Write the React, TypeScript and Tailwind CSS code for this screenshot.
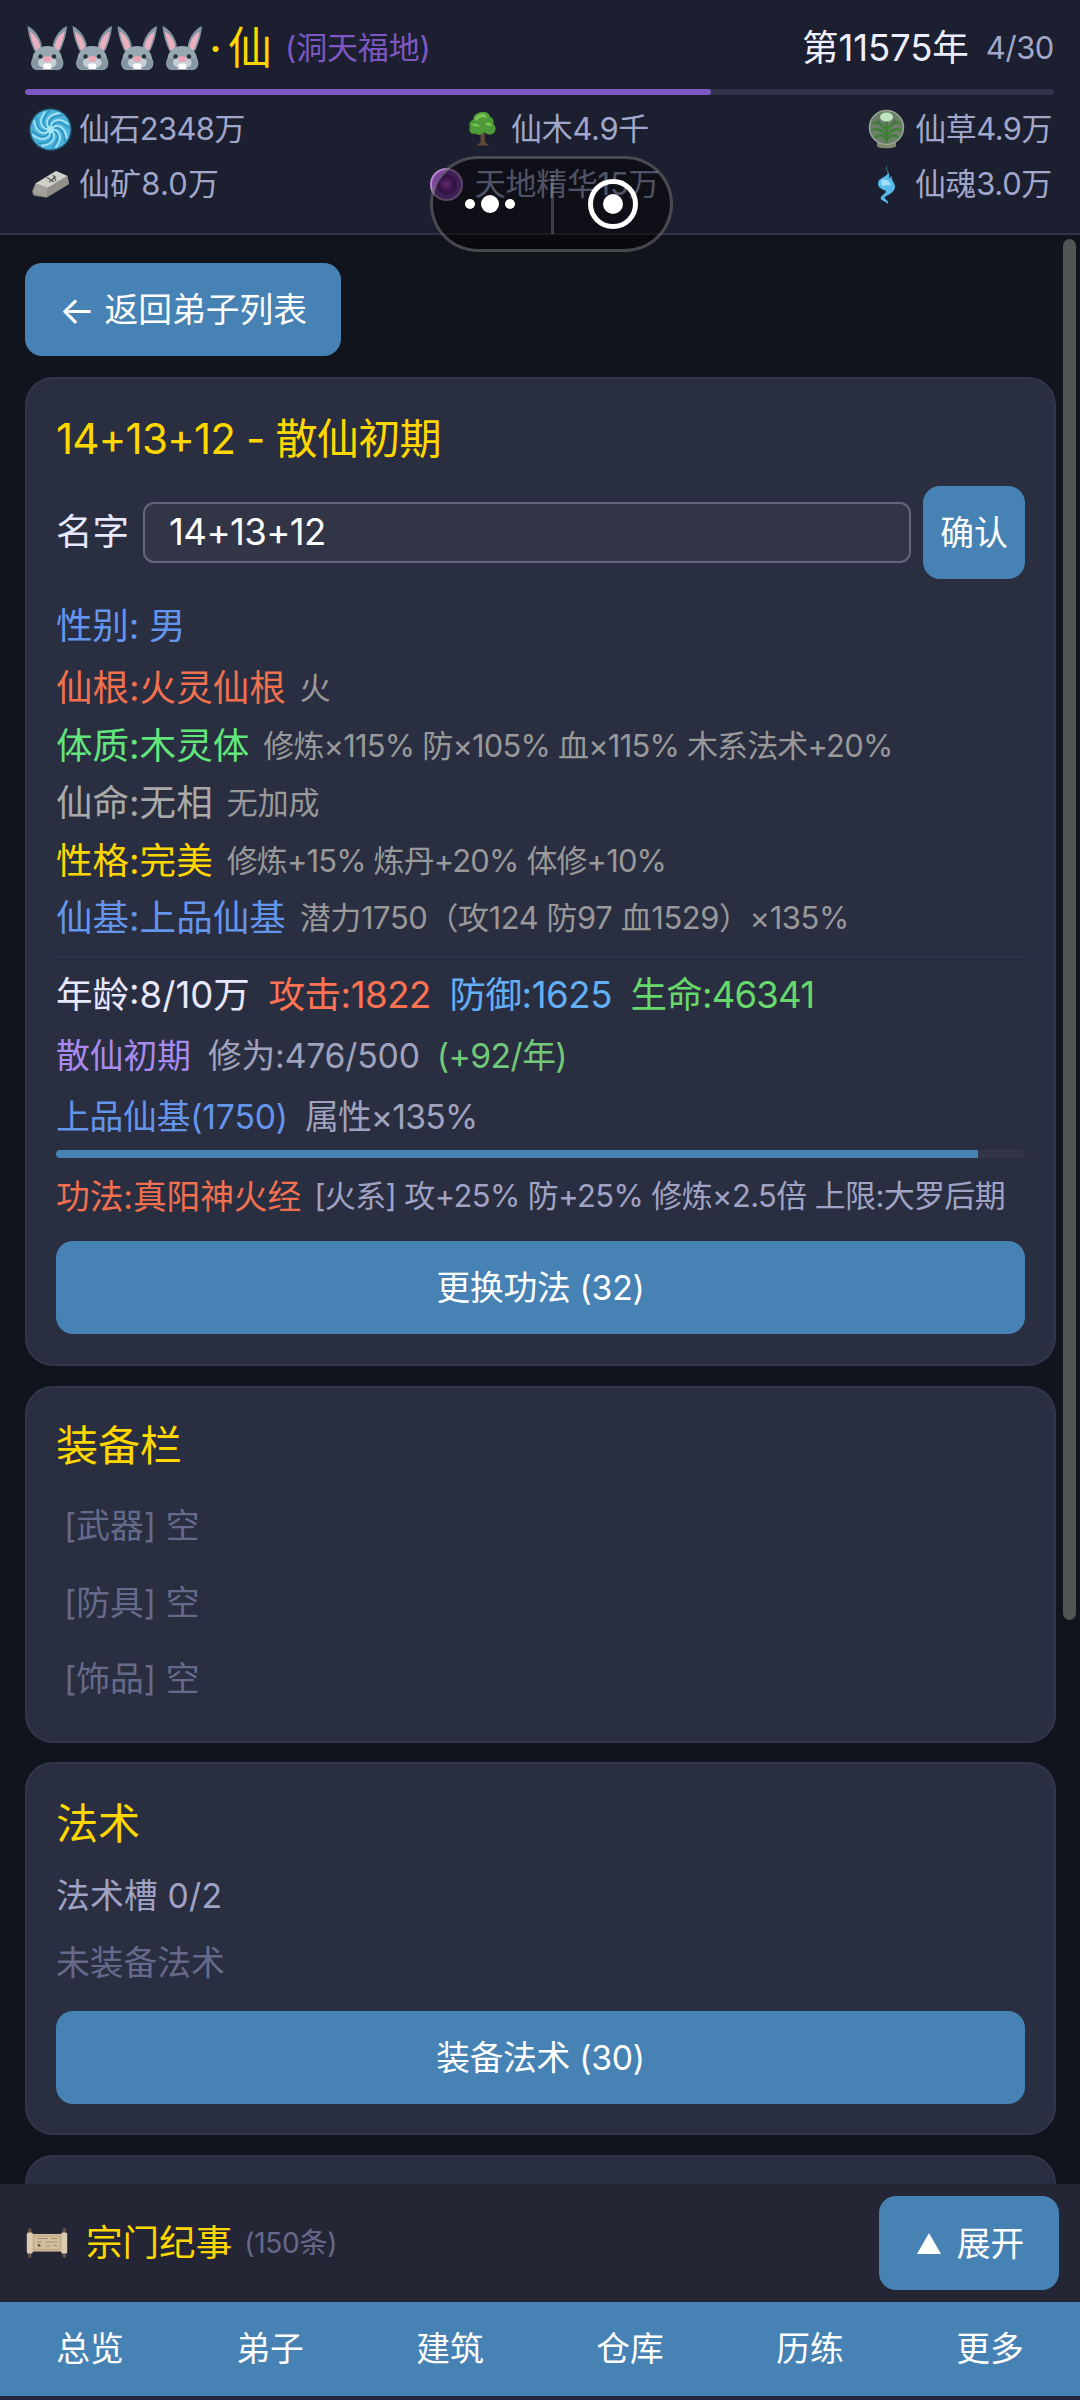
import React from "react";

function Rabbit() {
  return (
    <svg viewBox="0 0 45 48" className="h-[48px] w-[45px] shrink-0">
      <path d="M2.500 2C9 5 14 11 16.500 20L17 27H9.500C6 20 3 10 2.500 2Z" fill="#8496a1" />
      <path d="M42 2C35.500 5 30.500 11 28 20L27.500 27H35C38.500 20 41.500 10 42 2Z" fill="#8496a1" />
      <path d="M5 7.500C10 10.500 13.500 15 15 22L14 26H10.500C8 20 5.800 14 5 7.500Z" fill="#eab0bf" />
      <path d="M39.500 7.500C34.500 10.500 31 15 29.500 22L30.500 26H34C36.500 20 38.700 14 39.500 7.500Z" fill="#eab0bf" />
      <path d="M22.300 22C31 22 36.500 28 37 34.500C39.500 38 39 46 32 46H12.500C5.500 46 5 38 7.500 34.500C8 28 13.500 22 22.300 22Z" fill="#97a8b2" />
      <circle cx="13" cy="40" r="6.200" fill="#8697a2" />
      <circle cx="31.600" cy="40" r="6.200" fill="#8697a2" />
      <ellipse cx="18.500" cy="38.500" rx="5.500" ry="5" fill="#c3ced5" />
      <ellipse cx="26.100" cy="38.500" rx="5.500" ry="5" fill="#c3ced5" />
      <rect x="18.300" y="39.500" width="8" height="5.500" rx="1.500" fill="#fff" />
      <ellipse cx="22.300" cy="35" rx="4.200" ry="3" fill="#eba6b5" />
      <circle cx="15.500" cy="32.500" r="2.200" fill="#26343b" />
      <circle cx="29" cy="32.500" r="2.200" fill="#26343b" />
    </svg>
  );
}

function StoneIcon() {
  return (
    <svg viewBox="0 0 45 45" className="h-[45px] w-[45px] shrink-0">
      <circle cx="22.500" cy="22.500" r="21.500" fill="#256f93" opacity=".55" />
      <circle cx="22.500" cy="22.500" r="20" fill="#4ab2da" />
      {[0, 45, 90, 135, 180, 225, 270, 315].map((a) => (
        <g key={a} transform={`rotate(${a} 22.5 22.5)`} fill="none" strokeLinecap="round">
          <path d="M22.500 22.500C22 14 30 9 40 17" stroke="#a6e4f6" strokeWidth="1.800" />
          <path d="M24 22.500C24 15 31 12 41 21" stroke="#2a8fba" strokeWidth="1.200" />
        </g>
      ))}
      <circle cx="22.500" cy="22.500" r="3.500" fill="#a5e8f8" />
    </svg>
  );
}

function OreIcon() {
  return (
    <svg viewBox="0 0 45 45" className="h-[45px] w-[45px] shrink-0">
      <path d="M4 29L7.500 21.500L28 9L39.500 14L41 22L19 35.500L6 34Z" fill="#77756f" />
      <path d="M7.500 21.500L28 9L39.500 14L19.500 26Z" fill="#d0cfcb" />
      <path d="M19.500 26L39.500 14L41 22L18.500 35.500Z" fill="#918f8a" />
      <path d="M7.500 21.500L19.500 26L18.500 35.500L4.500 32Z" fill="#a3a19c" />
      <path d="M19 15.500L26 20M25 13L28 19M21 20L28 14.500" stroke="#5b5955" strokeWidth="1.300" fill="none" />
    </svg>
  );
}

function TreeIcon() {
  return (
    <svg viewBox="0 0 45 45" className="h-[45px] w-[45px] shrink-0">
      <path d="M20.500 22H24.500L25 35L29 38.500H16L20.500 35.500Z" fill="#60483a" />
      <path d="M22.500 24L16 18M23 26L30 19" stroke="#60483a" strokeWidth="1.500" />
      <path d="M22 5C27 4 30 8 30 10C34 11 34 15 33.500 17C37 20 36 26 32 27C28 29 26 26 24 25C21 29 17 28 15.500 26.500C11 28 8 24 10 20.500C8.500 17 10 13.500 13 13C13.500 8 17 5.500 22 5Z" fill="#4e9a38" />
      <path d="M20 7C24 6 27 8 27 11C22 9 18 11 17 14C14 14 14 9 20 7ZM12 18C15 15 19 17 20 20C17 19 14 20 12 18ZM25 17C28 14 32 16 32 19C30 18 27 20 25 17Z" fill="#79c455" />
    </svg>
  );
}

function HerbIcon() {
  return (
    <svg viewBox="0 0 45 45" className="h-[45px] w-[45px] shrink-0">
      <path d="M13 35H32V39C32 42 13 42 13 39Z" fill="#83866a" />
      <circle cx="22.500" cy="20.500" r="17" fill="#6c8069" stroke="#96a594" strokeWidth="1.500" />
      <g fill="none" stroke="#3f7f38" strokeWidth="2.400" strokeLinecap="round">
        <path d="M22.500 35V15" />
        <path d="M22.500 24C19 18 14 15 9.500 16" />
        <path d="M22.500 24C26 18 31 15 35.500 16" />
        <path d="M22.500 29C18 23 13 21 8.500 23" />
        <path d="M22.500 29C27 23 32 21 36.500 23" />
        <path d="M22.500 33C19 28 15 27 11.500 30" />
        <path d="M22.500 33C26 28 30 27 33.500 30" />
      </g>
      <ellipse cx="22.500" cy="10" rx="6.500" ry="4.500" fill="#bfe6c0" />
      <path d="M13 13L17 17M32 13L28 17" stroke="#4d6b48" strokeWidth="2" />
    </svg>
  );
}

function EssenceIcon() {
  return (
    <svg viewBox="0 0 45 45" className="h-[45px] w-[45px] shrink-0">
      <circle cx="22.500" cy="22.500" r="15.500" fill="#7f3fa8" stroke="#b78bcb" strokeWidth="2" />
      <circle cx="22.500" cy="22.500" r="10.500" fill="#65298f" />
      <circle cx="22.500" cy="22.500" r="6.500" fill="#8a35ac" />
      <circle cx="22.500" cy="22.500" r="3" fill="#b04fca" />
    </svg>
  );
}

function SoulIcon() {
  return (
    <svg viewBox="0 0 45 45" className="h-[45px] w-[45px] shrink-0">
      <path d="M22.500 3C20.500 7 25 9 23.500 12C22 15 13.500 16 14 22C14.300 26 18 27 21 28.500C24 30 19 32 17 35C15 38.500 21 38.500 24 42C25 37 19 37.500 21 35C24 32.500 31 31 31 24.500C31 20 27 19 27.500 14C26 15 26 16 25 16.500C26.500 10 21.500 8 22.500 3Z" fill="#57b9e8" />
      <path d="M18 18C22 16 27 20 27 24C24 21 20 26 17.500 23C16.500 21 17 19 18 18Z" fill="#a4dff7" />
    </svg>
  );
}

function ScrollIcon() {
  return (
    <svg viewBox="0 0 42 32" className="h-[32px] w-[42px] shrink-0">
      <rect x="2" y="1" width="3.500" height="30" rx="1.700" fill="#5d5149" />
      <rect x="36.500" y="1" width="3.500" height="30" rx="1.700" fill="#5d5149" />
      <rect x=".8" y="5.500" width="6" height="21" rx="1.500" fill="#dccbb0" />
      <rect x="35.200" y="5.500" width="6" height="21" rx="1.500" fill="#dccbb0" />
      <rect x="6" y="7" width="30" height="17.500" fill="#d3bf9f" />
      <rect x="8" y="9" width="26" height="13.500" fill="none" stroke="#b59d7d" strokeWidth=".8" />
      <path d="M11 11.500H22M25 11.500H31M11 15H16M19 15H31M12 19L16 18M20 19H24M27 18.500H31" stroke="#a48d6e" strokeWidth="1" />
      <path d="M11 18.500L13 16.500L14.500 20Z" fill="#5c4834" />
    </svg>
  );
}

function Resource({ icon, label, track }: { icon: React.ReactNode; label: string; track: string }) {
  return (
    <div className={`flex items-center gap-[6px] text-[30.94px] text-[#a0a7ca] ${track}`}>
      {icon}
      <span>{label}</span>
    </div>
  );
}

function Header() {
  return (
    <header className="flex h-[235px] shrink-0 flex-col border-b-[2.500px] border-[#30344a] bg-[#1c1f2f] px-[25px] pt-[18px]">
      <div className="flex h-[60px] items-center justify-between">
        <div className="flex items-center">
          <div className="flex">
            <Rabbit />
            <Rabbit />
            <Rabbit />
            <Rabbit />
          </div>
          <span className="ml-[4px] text-[45px] text-[#ffd700]">·</span>
          <span className="ml-[6px] text-[44px] text-[#ffd700]">仙</span>
          <span className="ml-[13px] text-[30.94px] tracking-[-0.1px] text-[#7e57c2]">(洞天福地)</span>
        </div>
        <div className="flex items-center gap-[17px] pr-[1px]">
          <span className="text-[36.56px] tracking-[-0.1px] text-[#eeeeff]">第11575年</span>
          <span className="text-[30.94px] tracking-[-0.4px] text-[#a0a7c8]">4/30</span>
        </div>
      </div>
      <div className="mt-[11px] mr-[1px] h-[6px] overflow-hidden rounded-full bg-[#30344a]">
        <div className="h-full w-[66.700%] rounded-full bg-[#7e57c2]" />
      </div>
      <div className="mt-[12px] flex h-[45px] items-center justify-between px-[3px]">
        <Resource icon={<StoneIcon />} label="仙石2348万" track="tracking-[-0.6px]" />
        <Resource icon={<TreeIcon />} label="仙木4.9千" track="tracking-[-0.3px]" />
        <Resource icon={<HerbIcon />} label="仙草4.9万" track="tracking-[-0.500px]" />
      </div>
      <div className="mt-[10px] flex h-[45px] items-center justify-between px-[3px]">
        <Resource icon={<OreIcon />} label="仙矿8.0万" track="tracking-[0.2px]" />
        <Resource icon={<EssenceIcon />} label="天地精华15万" track="tracking-[-0.2px]" />
        <Resource icon={<SoulIcon />} label="仙魂3.0万" track="tracking-[-0.3px]" />
      </div>
    </header>
  );
}

function Capsule() {
  return (
    <div className="absolute top-[156px] left-[430px] flex h-[96px] w-[243px] items-center rounded-full border-[3px] border-white/25 bg-black/50">
      <div className="flex flex-1 items-center justify-center gap-[6px] pr-[4px]">
        <i className="h-[10px] w-[10px] rounded-full bg-white" />
        <i className="h-[18px] w-[18px] rounded-full bg-white" />
        <i className="h-[10px] w-[10px] rounded-full bg-white" />
      </div>
      <div className="h-[59px] w-[3px] bg-white/20" />
      <div className="flex flex-1 items-center justify-center pl-[3px]">
        <div className="flex h-[50px] w-[50px] items-center justify-center rounded-full border-[5px] border-white">
          <i className="h-[20px] w-[20px] rounded-full bg-white" />
        </div>
      </div>
    </div>
  );
}

function Card({ children, className }: { children?: React.ReactNode; className: string }) {
  return (
    <section className={`w-[1031px] shrink-0 rounded-[28px] border-[2.500px] border-[#32364a] bg-[#2a2e41] px-[29px] pt-[29px] ${className}`}>
      {children}
    </section>
  );
}

function WideButton({ label, className }: { label: string; className: string }) {
  return (
    <button className={`h-[93px] w-full rounded-[17px] bg-[#4682b4] pt-[1px] text-[33.75px] tracking-[-0.3px] text-white ${className}`}>
      {label}
    </button>
  );
}

const traits = [
  { label: "仙根:火灵仙根", note: "火", color: "text-[#f0704f]", track: "" },
  { label: "体质:木灵体", note: "修炼×115% 防×105% 血×115% 木系法术+20%", color: "text-[#62e67c]", track: "tracking-[-0.8px]" },
  { label: "仙命:无相", note: "无加成", color: "text-[#aaaaaa]", track: "" },
  { label: "性格:完美", note: "修炼+15% 炼丹+20% 体修+10%", color: "text-[#ffd700]", track: "tracking-[-0.85px]" },
  { label: "仙基:上品仙基", note: "潜力1750（攻124 防97 血1529）×135%", color: "text-[#6495ed]", track: "tracking-[-0.4px]" },
];

const tabs = ["总览", "弟子", "建筑", "仓库", "历练", "更多"];

export default function App() {
  return (
    <div
      className="relative flex h-[2400px] w-[1080px] flex-col overflow-hidden bg-[#11141c] leading-none whitespace-nowrap"
      style={{ fontFamily: 'Inter, "Noto Sans CJK SC", sans-serif' }}
    >
      <Header />
      <main className="flex min-h-0 flex-1 flex-col items-start overflow-hidden pt-[28px] pl-[25px]">
        <button className="flex h-[93px] w-[316px] shrink-0 items-center justify-center gap-[9px] rounded-[17px] bg-[#4682b4] text-[33.75px] text-white">
          <span className="text-[38px]">←</span>
          <span>返回弟子列表</span>
        </button>

        <Card className="mt-[21px] h-[989px]">
          <h2 className="flex h-[62px] items-center text-[42.2px] tracking-[-0.9px] text-[#ffd700]">14+13+12 - 散仙初期</h2>
          <div className="mt-[15px] flex h-[94px] items-center">
            <span className="text-[36.56px] text-[#e8e8ff]">名字</span>
            <div className="ml-[14px] flex h-[61px] flex-1 items-center rounded-[11px] border-[2.500px] border-[#64667c] bg-[#323545] pl-[24px] text-[36.56px] tracking-[-0.6px] text-white">
              14+13+12
            </div>
            <button className="ml-[12px] h-[93px] w-[102px] rounded-[17px] bg-[#4682b4] pt-[1px] text-[33.75px] text-white">确认</button>
          </div>
          <div className="mt-[18px] flex h-[58px] items-center text-[36.56px] tracking-[-0.2px] text-[#6495ed]">性别: 男</div>
          <div className="mt-[5px]">
            {traits.map((t) => (
              <div key={t.label} className="flex h-[57.500px] items-center gap-[14px]">
                <span className={`text-[36.56px] ${t.color}`}>{t.label}</span>
                <span className={`text-[30.94px] text-[#999999] ${t.track}`}>{t.note}</span>
              </div>
            ))}
          </div>
          <div className="mt-[8px] h-[2px] bg-[#30344a]" />
          <div className="mt-[8px] flex h-[60px] items-center gap-[18.500px] text-[36.56px] tracking-[-0.45px]">
            <span className="tracking-normal text-[#e8e8ff]">年龄:8/10万</span>
            <span className="text-[#ff7352]">攻击:1822</span>
            <span className="text-[#64b0f6]">防御:1625</span>
            <span className="tracking-[-0.8px] text-[#66d96a]">生命:46341</span>
          </div>
          <div className="flex h-[61px] items-center gap-[17px] text-[33.75px]">
            <span className="text-[#a98af0]">散仙初期</span>
            <span className="tracking-[-0.2px] text-[#a0a3bd]">修为:476/500</span>
            <span className="tracking-[-0.6px] text-[#70c878]">(+92/年)</span>
          </div>
          <div className="flex h-[60px] items-center gap-[17px] text-[33.75px]">
            <span className="tracking-[-0.2px] text-[#6495ed]">上品仙基(1750)</span>
            <span className="tracking-[-0.8px] text-[#a0a3bd]">属性×135%</span>
          </div>
          <div className="mt-[3px] h-[8px] overflow-hidden rounded-full bg-[#323545]">
            <div className="h-full w-[95.200%] bg-[#4682b4]" />
          </div>
          <div className="mt-[13px] flex h-[52px] items-center gap-[13px]">
            <span className="text-[33.75px] tracking-[-0.1px] text-[#f0704f]">功法:真阳神火经</span>
            <span className="text-[30.94px] tracking-[-0.6px] text-[#a0a3c4]">[火系] 攻+25% 防+25% 修炼×2.5倍 上限:大罗后期</span>
          </div>
          <WideButton label="更换功法 (32)" className="mt-[18px]" />
        </Card>

        <Card className="mt-[20px] h-[357px]">
          <h2 className="flex h-[58px] items-center text-[42.2px] tracking-[-0.3px] text-[#ffd700]">装备栏</h2>
          <div className="mt-[13px] pl-[8px] text-[33.75px] text-[#666a8a]">
            {["武器", "防具", "饰品"].map((slot) => (
              <div key={slot} className="flex h-[76.500px] items-center">
                [{slot}] 空
              </div>
            ))}
          </div>
        </Card>

        <Card className="mt-[19px] h-[373px]">
          <h2 className="flex h-[62px] items-center text-[42.2px] tracking-[-0.3px] text-[#ffd700]">法术</h2>
          <div className="mt-[11px] flex h-[60px] items-center text-[33.75px] tracking-[0.2px] text-[#a0a3c4]">法术槽 0/2</div>
          <div className="mt-[7px] flex h-[60px] items-center text-[33.75px] text-[#666a8a]">未装备法术</div>
          <WideButton label="装备法术 (30)" className="mt-[18px]" />
        </Card>

        <Card className="mt-[20px] h-[200px]" />
      </main>

      <div className="flex h-[118px] shrink-0 items-center bg-[#242636] pr-[21px] pl-[26px]">
        <ScrollIcon />
        <span className="ml-[18px] text-[36.56px] text-[#ffd700]">宗门纪事</span>
        <span className="ml-[12px] text-[28.1px] tracking-[-0.3px] text-[#666a8a]">(150条)</span>
        <button className="ml-auto flex h-[94px] w-[180px] items-center justify-center gap-[16px] rounded-[17px] bg-[#4682b4] pt-[1px] pl-[3px] text-[33.75px] text-white">
          <svg viewBox="0 0 24 21" className="h-[21px] w-[24px]">
            <path d="M12 0L24 21H0Z" fill="#fff" />
          </svg>
          展开
        </button>
      </div>
      <nav className="grid h-[98px] shrink-0 grid-cols-6 border-b-[4px] border-[#222639] bg-[#4682b4]">
        {tabs.map((t) => (
          <button key={t} className="text-[33.75px] text-white">
            {t}
          </button>
        ))}
      </nav>

      <div className="absolute top-[239px] right-[4px] h-[1381px] w-[13px] rounded-full bg-[#525455]" />
      <Capsule />
    </div>
  );
}
